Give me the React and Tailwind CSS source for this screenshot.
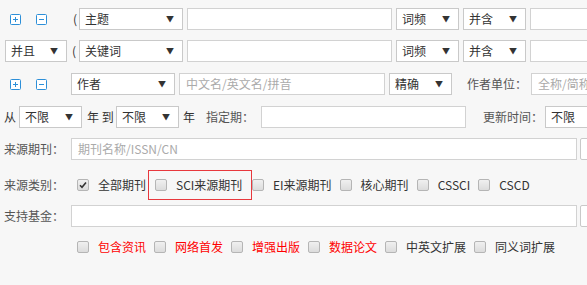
import React from 'react';

const font = { fontFamily: '"Microsoft YaHei", "Noto Sans CJK SC", "Liberation Sans", sans-serif' };

function PlusMinus() {
    return (
        <div className="flex items-center w-[71px] shrink-0 pl-[10px] gap-[15px]">
            <svg width="11" height="11" viewBox="0 0 11 11">
                <rect x="0.5" y="0.5" width="10" height="10" rx="1" fill="#fff" stroke="#2d8fd8" />
                <path d="M3 5.5h5M5.5 3v5" stroke="#2d8fd8" strokeWidth="1" />
            </svg>
            <svg width="11" height="11" viewBox="0 0 11 11">
                <rect x="0.5" y="0.5" width="10" height="10" rx="1" fill="#fff" stroke="#2d8fd8" />
                <path d="M3 5.5h5" stroke="#2d8fd8" strokeWidth="1" />
            </svg>
        </div>
    );
}

function Select({ label, w }) {
    return (
        <div className={`${w} h-[22px] shrink-0 flex items-center justify-between bg-white border border-[#c9c9c9] pl-[5px] pr-[8px] text-[12px] text-[#333]`}>
            <span>{label}</span>
            <span className="text-[8px] text-[#333]">▼</span>
        </div>
    );
}

function Input({ w, placeholder }) {
    return (
        <div className={`${w} h-[22px] shrink-0 flex items-center bg-white border border-[#d2d2d2] pl-[6px] text-[12px] text-[#aaa] overflow-hidden whitespace-nowrap`}>
            {placeholder}
        </div>
    );
}

function Check({ checked, label, red }) {
    return (
        <div className="flex items-center shrink-0">
            <span className="w-[12px] h-[12px] rounded-[2px] border border-[#b5b5b5] bg-gradient-to-b from-[#f0f0f0] to-[#dcdcdc] flex items-center justify-center">
                {checked && (
                    <svg width="8" height="8" viewBox="0 0 8 8">
                        <path d="M1 4.2l2 2L7 1.5" fill="none" stroke="#333" strokeWidth="1.6" />
                    </svg>
                )}
            </span>
            <span className={`ml-[9px] text-[12px] ${red ? 'text-[#f00]' : 'text-[#333]'}`}>{label}</span>
        </div>
    );
}

export default function App() {
    return (
        <div style={font} className="w-[587px] h-[285px] overflow-hidden bg-[#f7f7f7] text-[#333] text-[12px]">
            <div className="pt-[8px] flex flex-col">
                <div className="flex items-center h-[22px] whitespace-nowrap">
                    <PlusMinus />
                    <span className="w-[8px] shrink-0 pl-[2px]">(</span>
                    <Select label="主题" w="w-[104px]" />
                    <div className="w-[4px] shrink-0" />
                    <Input w="w-[205px]" />
                    <div className="w-[4px] shrink-0" />
                    <Select label="词频" w="w-[63px]" />
                    <div className="w-[4px] shrink-0" />
                    <Select label="并含" w="w-[63px]" />
                    <div className="w-[4px] shrink-0" />
                    <Input w="w-[100px]" />
                </div>
                <div className="flex items-center h-[22px] mt-[10px] whitespace-nowrap">
                    <div className="w-[5px] shrink-0" />
                    <Select label="并且" w="w-[62px]" />
                    <span className="w-[12px] shrink-0 pl-[5px]">(</span>
                    <Select label="关键词" w="w-[104px]" />
                    <div className="w-[4px] shrink-0" />
                    <Input w="w-[205px]" />
                    <div className="w-[4px] shrink-0" />
                    <Select label="词频" w="w-[63px]" />
                    <div className="w-[4px] shrink-0" />
                    <Select label="并含" w="w-[63px]" />
                    <div className="w-[4px] shrink-0" />
                    <Input w="w-[100px]" />
                </div>
                <div className="flex items-center h-[22px] mt-[11px] whitespace-nowrap">
                    <PlusMinus />
                    <Select label="作者" w="w-[104px]" />
                    <div className="w-[4px] shrink-0" />
                    <Input w="w-[206px]" placeholder="中文名/英文名/拼音" />
                    <div className="w-[4px] shrink-0" />
                    <Select label="精确" w="w-[63px]" />
                    <span className="w-[79px] shrink-0 pl-[15px] text-[#555]">作者单位：</span>
                    <Input w="w-[100px]" placeholder="全称/简称/曾用名" />
                </div>
                <div className="flex items-center h-[22px] mt-[11px] whitespace-nowrap">
                    <span className="w-[19px] shrink-0 pl-[4px]">从</span>
                    <Select label="不限" w="w-[63px]" />
                    <span className="w-[34px] shrink-0 pl-[5px]">年 到</span>
                    <Select label="不限" w="w-[63px]" />
                    <span className="w-[27px] shrink-0 pl-[4px]">年</span>
                    <span className="w-[55px] shrink-0 text-[#555]">指定期：</span>
                    <Input w="w-[205px]" />
                    <span className="w-[79px] shrink-0 pl-[17px] text-[#555]">更新时间：</span>
                    <Select label="不限" w="w-[63px]" />
                </div>
                <div className="flex items-center h-[22px] mt-[10px] whitespace-nowrap">
                    <span className="w-[71px] shrink-0 pl-[4px] text-[#555]">来源期刊：</span>
                    <Input w="w-[506px]" placeholder="期刊名称/ISSN/CN" />
                    <div className="w-[3px] shrink-0" />
                    <div className="w-[20px] h-[22px] shrink-0 bg-white border border-[#c9c9c9] rounded-[2px]" />
                </div>
                <div className="flex items-center h-[30px] mt-[10px] whitespace-nowrap">
                    <span className="w-[77px] shrink-0 pl-[4px] text-[#555]">来源类别：</span>
                    <Check checked label="全部期刊" />
                    <div className="w-[104px] h-[30px] shrink-0 ml-[2px] border border-[#e8383d] flex items-center pl-[6px]">
                        <Check label="SCI来源期刊" />
                    </div>
                    <div className="flex items-center gap-[8px]">
                        <Check label="EI来源期刊" />
                        <Check label="核心期刊" />
                        <Check label="CSSCI" />
                        <Check label="CSCD" />
                    </div>
                </div>
                <div className="flex items-center h-[22px] mt-[5px] whitespace-nowrap">
                    <span className="w-[71px] shrink-0 pl-[4px] text-[#555]">支持基金：</span>
                    <Input w="w-[506px]" />
                    <div className="w-[3px] shrink-0" />
                    <div className="w-[20px] h-[22px] shrink-0 bg-white border border-[#c9c9c9] rounded-[2px]" />
                </div>
                <div className="flex items-center h-[14px] mt-[13px] pl-[77px] gap-[8px] whitespace-nowrap">
                    <Check red label="包含资讯" />
                    <Check red label="网络首发" />
                    <Check red label="增强出版" />
                    <Check red label="数据论文" />
                    <Check label="中英文扩展" />
                    <Check label="同义词扩展" />
                </div>
            </div>
        </div>
    );
}
